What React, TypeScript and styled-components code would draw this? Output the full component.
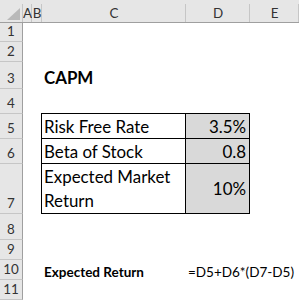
import { createGlobalStyle, styled } from "styled-components";

const GlobalStyle = createGlobalStyle`
  html, body {
    margin: 0;
    padding: 0;
    background: #ffffff;
  }

  body {
    font-family: Lato, "Liberation Sans", sans-serif;
    color: #000000;
  }
`;

type Align = "left" | "right";
type VAlign = "end" | "center";

interface CellSpec {
  text?: string;
  bold?: boolean;
  large?: boolean;
  wrap?: boolean;
  align?: Align;
  valign?: VAlign;
  shade?: boolean;
  box?: "left" | "right";
  boxTop?: boolean;
}

interface RowSpec {
  height: number;
  c?: CellSpec;
  d?: CellSpec;
}

const COLUMNS = ["A", "B", "C", "D", "E"];

const ROWS: RowSpec[] = [
  { height: 19 },
  { height: 20 },
  { height: 27, c: { text: "CAPM", bold: true, large: true } },
  { height: 25 },
  {
    height: 25,
    c: { text: "Risk Free Rate", large: true, box: "left", boxTop: true },
    d: { text: "3.5%", large: true, align: "right", shade: true, box: "right", boxTop: true },
  },
  {
    height: 25,
    c: { text: "Beta of Stock", large: true, box: "left" },
    d: { text: "0.8", large: true, align: "right", shade: true, box: "right" },
  },
  {
    height: 50,
    c: { text: "Expected Market Return", large: true, wrap: true, box: "left" },
    d: { text: "10%", large: true, align: "right", valign: "center", shade: true, box: "right" },
  },
  { height: 26 },
  { height: 20 },
  {
    height: 20,
    c: { text: "Expected Return", bold: true },
    d: { text: "=D5+D6*(D7-D5)" },
  },
  { height: 20 },
];

function App() {
  return (
    <>
      <GlobalStyle />
      <Sheet $rows={ROWS.map((r) => `${r.height}px`).join(" ")}>
        <Corner>
          <svg width="14" height="13" viewBox="0 0 14 13">
            <polygon points="13,0 13,12 0,12" fill="#b9b9b9" />
          </svg>
        </Corner>
        {COLUMNS.map((col) => (
          <ColHeader key={col}>{col}</ColHeader>
        ))}

        {ROWS.map((row, i) => (
          <Row key={i} index={i + 1} row={row} />
        ))}
      </Sheet>
    </>
  );
}

function Row({ index, row }: { index: number; row: RowSpec }) {
  return (
    <>
      <RowHeader>{index}</RowHeader>
      <Cell />
      <Cell />
      <SheetCell spec={row.c} />
      <SheetCell spec={row.d} />
      <Cell />
    </>
  );
}

function SheetCell({ spec }: { spec?: CellSpec }) {
  if (!spec) return <Cell />;
  return (
    <Cell
      $bold={spec.bold}
      $large={spec.large}
      $wrap={spec.wrap}
      $align={spec.align ?? "left"}
      $valign={spec.valign ?? "end"}
      $shade={spec.shade}
      $box={spec.box}
      $boxTop={spec.boxTop}
    >
      {spec.wrap ? <Wrapped>{spec.text}</Wrapped> : spec.text}
    </Cell>
  );
}

export default App;

const Sheet = styled.div<{ $rows: string }>`
  width: 299px;
  height: 300px;
  overflow: hidden;
  background: #ffffff;

  display: grid;
  grid-template-columns: 23px 9px 10px 144px 64px 1fr;
  grid-template-rows: 23px ${(p) => p.$rows};
`;

const headerBg = "#e6e6e6";
const headerEdge = "#9f9f9f";
const headerRule = "#c6c6c6";

const Corner = styled.div`
  background: linear-gradient(${headerRule}, ${headerRule}) right 4px / 1px calc(100% - 4px) no-repeat,
    ${headerBg};
  border-bottom: 1px solid ${headerEdge};

  display: flex;
  justify-content: flex-end;
  align-items: flex-end;
  padding: 0 2px 1px 0;
`;

const ColHeader = styled.div`
  background: linear-gradient(${headerRule}, ${headerRule}) right 4px / 1px calc(100% - 4px) no-repeat,
    ${headerBg};
  border-bottom: 1px solid ${headerEdge};

  display: flex;
  justify-content: center;
  align-items: flex-end;
  padding-bottom: 1px;

  font-size: 13.4px;
  line-height: 16px;
  color: #333333;
  overflow: hidden;
`;

const RowHeader = styled.div`
  background: ${headerBg};
  border-right: 1px solid ${headerEdge};
  border-bottom: 1px solid ${headerRule};

  display: flex;
  justify-content: center;
  align-items: flex-end;
  padding-bottom: 2px;

  font-size: 13.4px;
  line-height: 16px;
  color: #333333;
`;

const Cell = styled.div<{
  $bold?: boolean;
  $large?: boolean;
  $wrap?: boolean;
  $align?: Align;
  $valign?: VAlign;
  $shade?: boolean;
  $box?: "left" | "right";
  $boxTop?: boolean;
}>`
  display: flex;
  justify-content: ${(p) => (p.$align === "right" ? "flex-end" : "flex-start")};
  align-items: ${(p) => (p.$valign === "center" ? "center" : "flex-end")};
  padding: 0 3px 0 2px;
  min-width: 0;

  font-size: ${(p) => (p.$large ? "16.9px" : "13.5px")};
  font-weight: ${(p) => (p.$bold ? 700 : 400)};
  line-height: ${(p) => (p.$large ? "22px" : "16px")};
  white-space: ${(p) => (p.$wrap ? "normal" : "nowrap")};

  background: ${(p) => (p.$shade ? "#d9d9d9" : "transparent")};

  ${(p) =>
    p.$box &&
    `
    border-right: 1px solid #000000;
    border-bottom: 1px solid #000000;
  `}
  ${(p) =>
    p.$box === "left" &&
    `
    border-left: 1px solid #000000;
    margin-left: -1px;
  `}
  ${(p) =>
    p.$boxTop &&
    `
    border-top: 1px solid #000000;
    margin-top: -1px;
  `}
`;

const Wrapped = styled.span`
  display: block;
  line-height: 24px;
`;
